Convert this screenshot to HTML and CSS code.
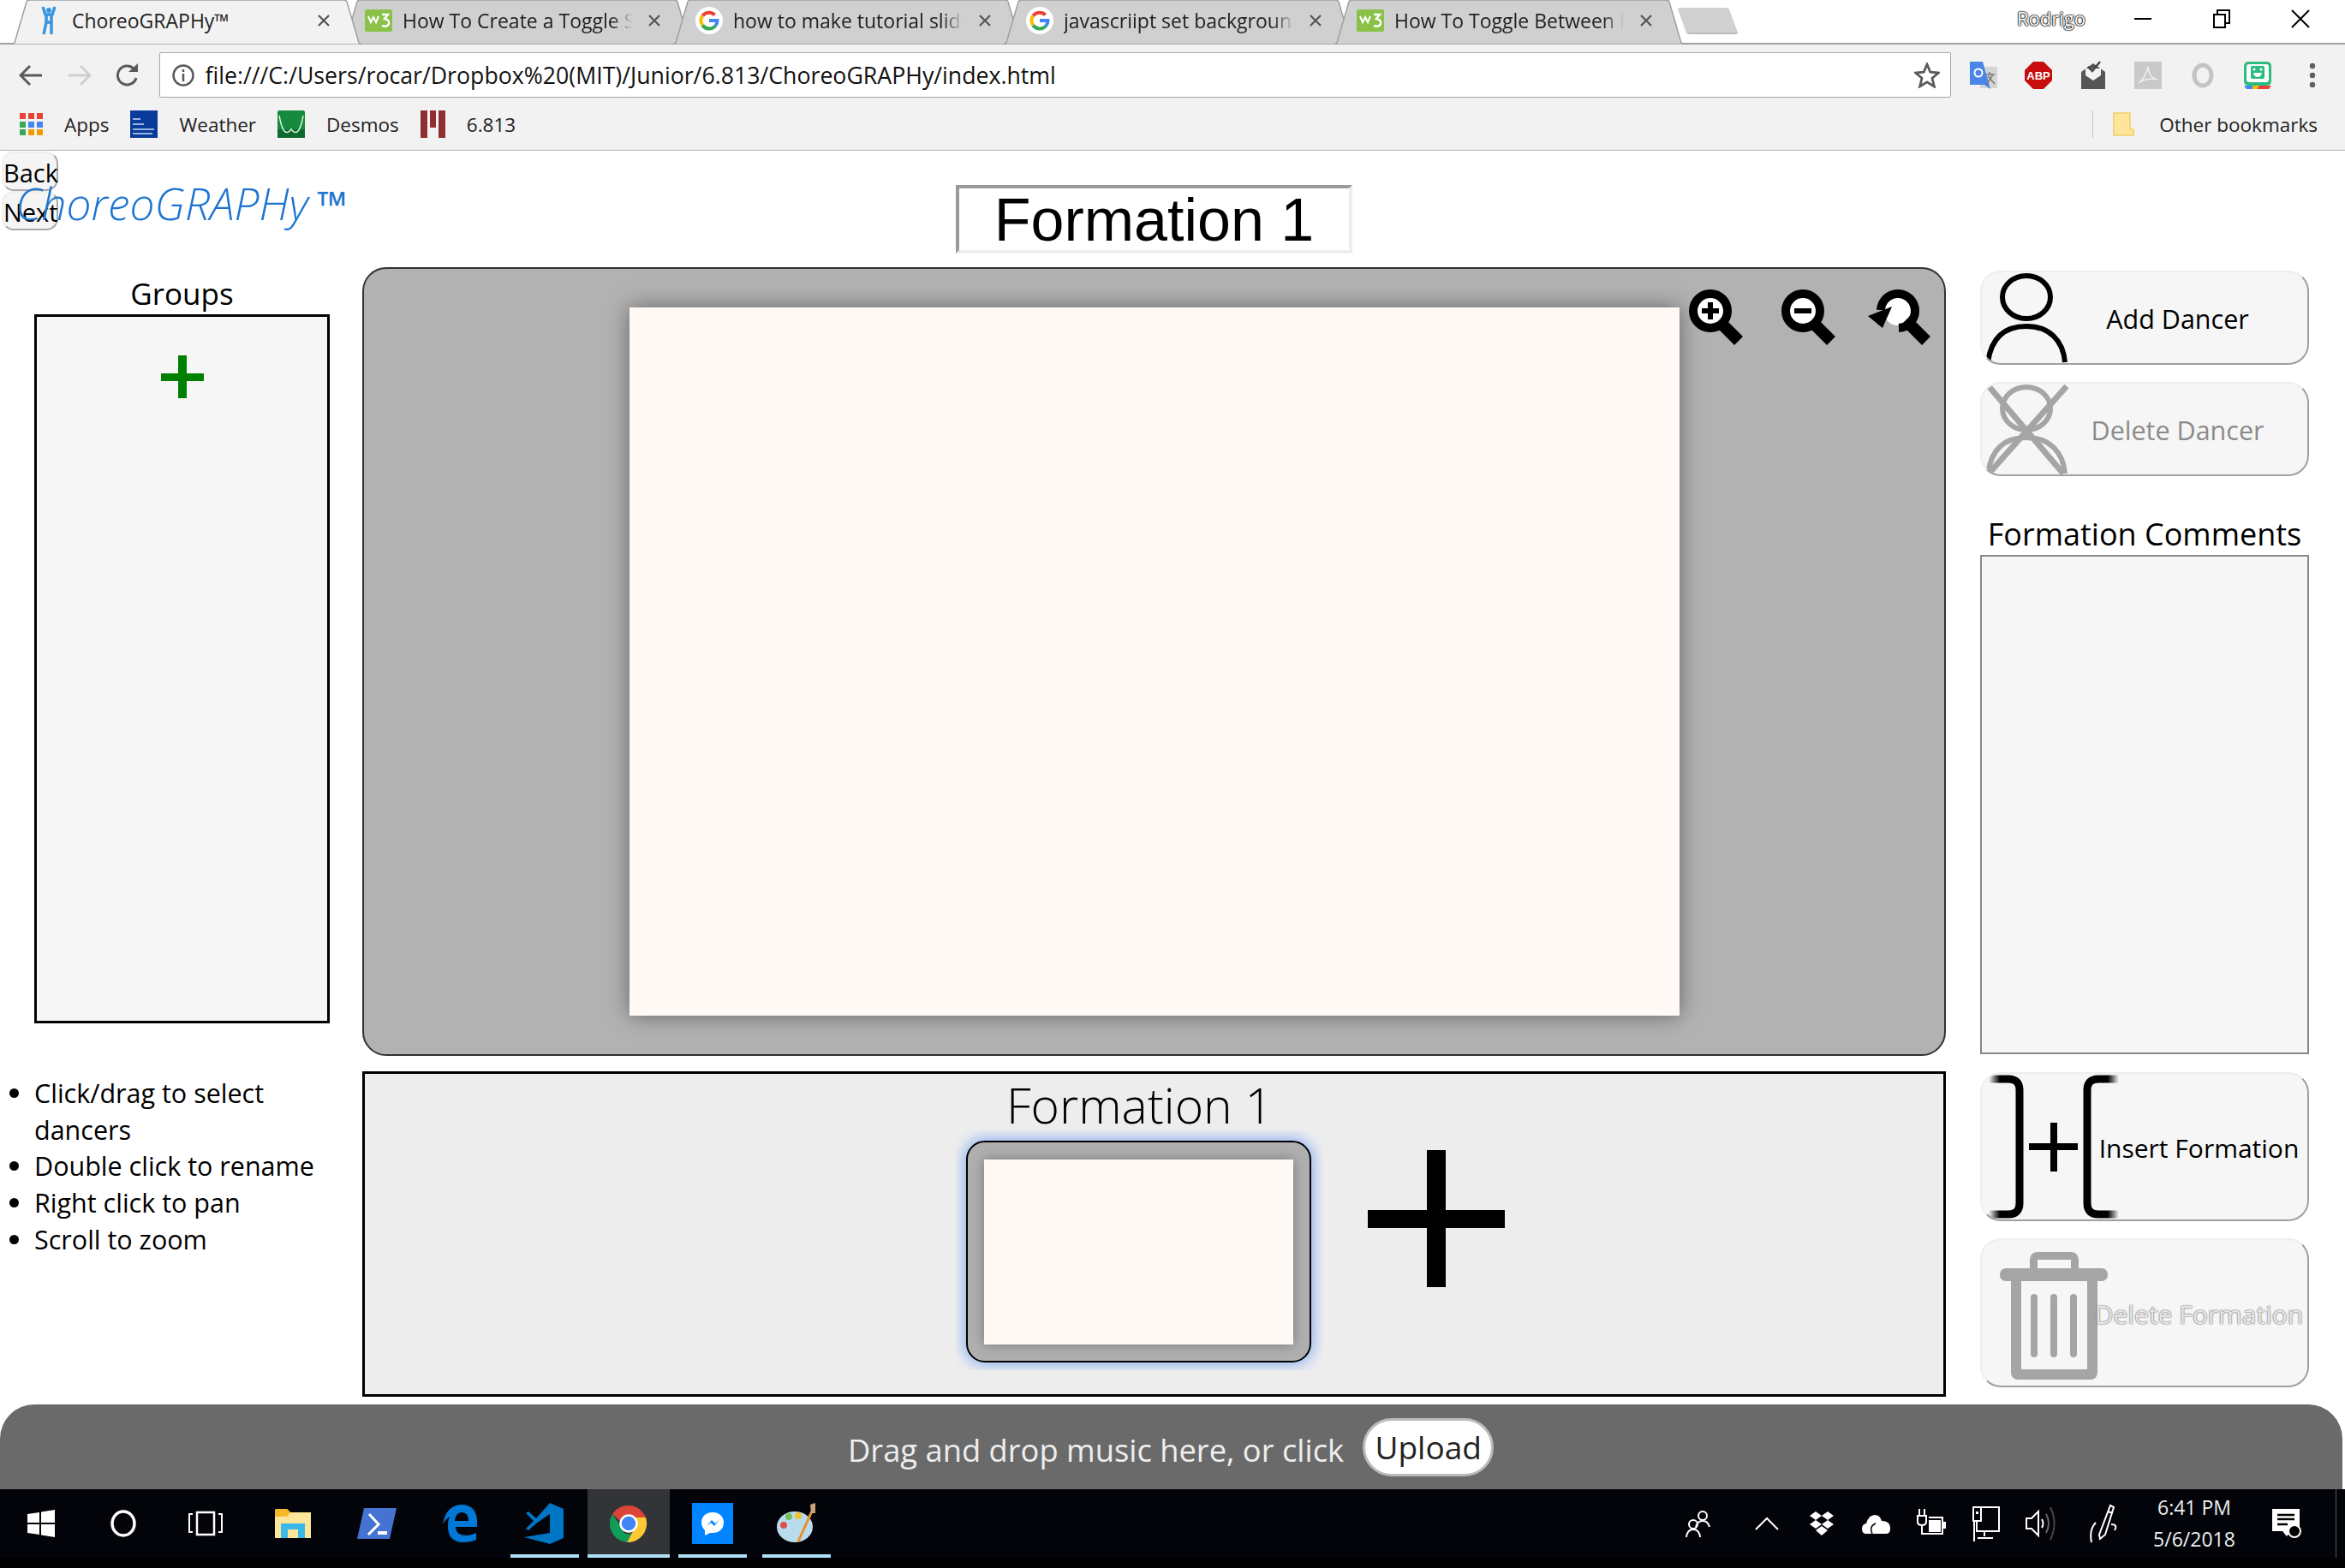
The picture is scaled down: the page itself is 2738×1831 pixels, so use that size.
FILE: index.html
```html
<!DOCTYPE html>
<html>
<head>
  <title>ChoreoGRAPHy</title>
  <link rel="stylesheet" href="styles.css">
</head>
<body>

<!-- shared icons -->
<svg class="defs">
  <symbol id="tabShape" viewBox="0 0 410 52" preserveAspectRatio="none">
    <path d="M0 52 L4 50 L18 2 Q19 0 22 0 L388 0 Q391 0 392 2 L406 50 L410 52 Z"/>
  </symbol>
  <symbol id="w3" viewBox="0 0 32 26">
    <rect width="32" height="26" rx="2" fill="#8ac249"/>
    <path d="M4 8 L7 15 L10 9 L13 15 L16 8" fill="none" stroke="#fff" stroke-width="2"/>
    <path d="M20 6 H27 L23 11 Q29 12 28 17 Q26 21 20 19" fill="none" stroke="#fff" stroke-width="2.4"/>
  </symbol>
  <symbol id="google" viewBox="0 0 32 32">
    <circle cx="16" cy="16" r="16" fill="#fff"/>
    <path d="M22.5 9.5 A9.5 9.5 0 0 0 8.3 10.5" fill="none" stroke="#ea4335" stroke-width="4"/>
    <path d="M8.3 10.5 A9.5 9.5 0 0 0 8.3 21.5" fill="none" stroke="#fbbc05" stroke-width="4"/>
    <path d="M8.3 21.5 A9.5 9.5 0 0 0 23 22.5" fill="none" stroke="#34a853" stroke-width="4"/>
    <path d="M23 22.5 A9.5 9.5 0 0 0 25.5 16 H16" fill="none" stroke="#4285f4" stroke-width="4"/>
  </symbol>
  <symbol id="close" viewBox="0 0 16 16">
    <path d="M2 2 L14 14 M14 2 L2 14" stroke="#555" stroke-width="2.2" fill="none"/>
  </symbol>
</svg>

<div class="tabstrip">
  <div class="tab active">
    <svg class="tab-bg"><use href="#tabShape"/></svg>
    <svg class="tab-icon" width="18" height="34" viewBox="0 0 18 34">
      <circle cx="9" cy="5" r="3" fill="#3a95e0"/>
      <path d="M2 1 L5 10 L13 10 L16 1 M6 10 L6 19 L3 33 M12 10 L12 19 L12 33 M6 19 L12 19" fill="none" stroke="#3a95e0" stroke-width="3.5"/>
    </svg>
    <span class="tab-title t1">ChoreoGRAPHy™</span>
    <svg class="tab-close" width="16" height="16"><use href="#close"/></svg>
  </div>
  <div class="tab">
    <svg class="tab-bg"><use href="#tabShape"/></svg>
    <svg class="tab-icon" width="32" height="26"><use href="#w3"/></svg>
    <span class="tab-title fade">How To Create a Toggle S</span>
    <svg class="tab-close" width="16" height="16"><use href="#close"/></svg>
  </div>
  <div class="tab">
    <svg class="tab-bg"><use href="#tabShape"/></svg>
    <svg class="tab-icon" width="32" height="32"><use href="#google"/></svg>
    <span class="tab-title fade">how to make tutorial slide</span>
    <svg class="tab-close" width="16" height="16"><use href="#close"/></svg>
  </div>
  <div class="tab">
    <svg class="tab-bg"><use href="#tabShape"/></svg>
    <svg class="tab-icon" width="32" height="32"><use href="#google"/></svg>
    <span class="tab-title fade">javascriipt set background</span>
    <svg class="tab-close" width="16" height="16"><use href="#close"/></svg>
  </div>
  <div class="tab">
    <svg class="tab-bg"><use href="#tabShape"/></svg>
    <svg class="tab-icon" width="32" height="26"><use href="#w3"/></svg>
    <span class="tab-title fade">How To Toggle Between H</span>
    <svg class="tab-close" width="16" height="16"><use href="#close"/></svg>
  </div>
  <div class="new-tab"></div>
  <div class="profile">Rodrigo</div>
  <div class="win-btn">
    <svg width="20" height="20"><path d="M0 10 H20" stroke="#000" stroke-width="2"/></svg>
  </div>
  <div class="win-btn">
    <svg width="20" height="22"><path d="M1 6 H14 V21 H1 Z M5 6 V1 H19 V16 H14" fill="none" stroke="#000" stroke-width="2"/></svg>
  </div>
  <div class="win-btn">
    <svg width="22" height="22"><path d="M1 1 L21 21 M21 1 L1 21" stroke="#000" stroke-width="2"/></svg>
  </div>
</div>

<div class="toolbar">
  <div class="nav-btn">
    <svg width="28" height="26"><path d="M27 13 H3 M13 2 L2 13 L13 24" fill="none" stroke="#5a5a5a" stroke-width="3"/></svg>
  </div>
  <div class="nav-btn">
    <svg width="28" height="26"><path d="M1 13 H25 M15 2 L26 13 L15 24" fill="none" stroke="#cfcfcf" stroke-width="3"/></svg>
  </div>
  <div class="nav-btn">
    <svg width="28" height="28"><path d="M24 17 A11 11 0 1 1 21 6" fill="none" stroke="#5a5a5a" stroke-width="3"/><path d="M15 10 H26 V0 Z" fill="#5a5a5a"/></svg>
  </div>
  <div class="omnibox">
    <svg class="info" width="26" height="26"><circle cx="13" cy="13" r="11.5" fill="none" stroke="#5a5a5a" stroke-width="2.5"/><path d="M13 11 V20 M13 6 V9" stroke="#5a5a5a" stroke-width="2.5"/></svg>
    <span class="url">file:///C:/Users/rocar/Dropbox%20(MIT)/Junior/6.813/ChoreoGRAPHy/index.html</span>
    <svg class="star" width="30" height="30" viewBox="0 0 30 30"><path d="M15 2 L18.8 11.2 L28.5 12 L21 18.3 L23.4 28 L15 22.8 L6.6 28 L9 18.3 L1.5 12 L11.2 11.2 Z" fill="none" stroke="#5a5a5a" stroke-width="2.8"/></svg>
  </div>
  <div class="ext">
    <svg width="32" height="32" viewBox="0 0 32 32"><rect x="12" y="6" width="20" height="25" fill="#d5d5d5"/><path d="M0 0 H15 L24 32 L17 27 H0 Z" fill="#4a86e8"/><path d="M18 15 H29 M23 12 V15 M20 26 L27 15 M21 17 L29 26" stroke="#777" stroke-width="1.5" fill="none"/><circle cx="10" cy="13" r="4.5" fill="none" stroke="#fff" stroke-width="2"/></svg>
  </div>
  <div class="ext">
    <svg width="32" height="32" viewBox="0 0 32 32"><path d="M10 0 H22 L32 10 V22 L22 32 H10 L0 22 V10 Z" fill="#c70d0d"/><text x="16" y="21" class="abp">ABP</text></svg>
  </div>
  <div class="ext">
    <svg width="30" height="36" viewBox="0 0 30 36"><path d="M1 14 L15 4 L29 14 V34 H1 Z" fill="#555"/><path d="M6 10 H24 V18 L15 24 L6 18 Z" fill="#f2f2f2"/><path d="M9 8 L14 13 L23 2" fill="none" stroke="#444" stroke-width="2.5"/></svg>
  </div>
  <div class="ext">
    <svg width="32" height="32" viewBox="0 0 32 32"><rect width="32" height="32" fill="#c9c9c9"/><path d="M5 25 Q13 19 16 6 Q17 19 27 21 Q15 18 5 25 Z" fill="none" stroke="#eee" stroke-width="1.5"/></svg>
  </div>
  <div class="ext">
    <svg width="26" height="30" viewBox="0 0 26 30"><ellipse cx="13" cy="15" rx="10" ry="12" fill="none" stroke="#c4c4c4" stroke-width="5"/></svg>
  </div>
  <div class="ext">
    <svg width="32" height="32" viewBox="0 0 32 32"><rect width="32" height="28" rx="5" fill="#2bbd7e"/><rect x="3" y="3" width="26" height="21" rx="3" fill="#fff"/><rect x="8" y="5" width="16" height="15" rx="2" fill="#2bbd7e"/><circle cx="12" cy="9" r="1.5" fill="#fff"/><circle cx="20" cy="9" r="1.5" fill="#fff"/><path d="M11 13 H21 Q20 18 16 18 Q12 18 11 13 Z" fill="#fff"/><path d="M0 28 H10 V32 H3 Z" fill="#4285f4"/><path d="M10 28 H18 L15 32 H10 Z" fill="#fbbc05"/><path d="M18 28 H32 L29 32 H15 Z" fill="#ea4335"/></svg>
  </div>
  <div class="ext">
    <svg width="8" height="30"><circle cx="4" cy="4" r="3.2" fill="#5f5f5f"/><circle cx="4" cy="15" r="3.2" fill="#5f5f5f"/><circle cx="4" cy="26" r="3.2" fill="#5f5f5f"/></svg>
  </div>
</div>

<div class="bookmarks">
  <svg class="bm-icon" width="27" height="26" viewBox="0 0 27 26">
    <path d="M0 0h7v7H0zM10 0h7v7h-7zM20 0h7v7h-7z" fill="#e94235"/>
    <path d="M0 10h7v7H0z" fill="#34a853"/><path d="M10 10h7v7h-7zM20 10h7v7h-7z" fill="#4285f4"/>
    <path d="M0 19h7v7H0z" fill="#34a853"/><path d="M20 19h7v7h-7zM10 19h7v7h-7z" fill="#f29900"/>
  </svg>
  <span class="bm-label">Apps</span>
  <svg class="bm-icon" width="32" height="32" viewBox="0 0 32 32"><rect width="32" height="32" fill="#0a3a9a"/><path d="M3 10 H12 M3 16 H16 M3 22 H28 M3 27 H26" stroke="#9ab4e0" stroke-width="2"/></svg>
  <span class="bm-label">Weather</span>
  <svg class="bm-icon" width="32" height="32" viewBox="0 0 32 32"><rect width="32" height="32" rx="2" fill="#168a3e"/><rect y="22" width="32" height="10" fill="#0f6a30"/><path d="M2 6 Q7 34 16 22 Q25 34 30 6" fill="none" stroke="#d8f0dc" stroke-width="1.5"/></svg>
  <span class="bm-label">Desmos</span>
  <svg class="bm-icon" width="29" height="32" viewBox="0 0 29 32"><path d="M0 0h8v32H0zM11 0h7v20h-7zM21 0h8v32h-8z" fill="#8f2f2f"/></svg>
  <span class="bm-label">6.813</span>
  <div class="bm-right">
    <div class="bm-divider"></div>
    <svg class="bm-folder" width="25" height="28" viewBox="0 0 25 28"><path d="M1 1 H20 V20 H24 V27 H1 Z" fill="#fde59a" stroke="#efcf6a" stroke-width="1.5"/></svg>
    <span class="bm-label">Other bookmarks</span>
  </div>
</div>

<div class="page">
  <button class="step-btn back-btn">Back</button>
  <button class="step-btn next-btn">Next</button>

  <div class="page-head">
    <div class="logo">ChoreoGRAPHy <span class="tm">™</span></div>
    <div class="title-box">Formation 1</div>
  </div>

  <div class="left-col">
    <div class="groups-head">Groups</div>
    <div class="groups-box">
      <div class="green-plus"></div>
    </div>
    <ul class="help">
      <li>Click/drag to select dancers</li>
      <li>Double click to rename</li>
      <li>Right click to pan</li>
      <li>Scroll to zoom</li>
    </ul>
  </div>

  <div class="stage">
    <div class="canvas"></div>
    <div class="zoom-tools">
      <svg width="64" height="66" viewBox="0 0 64 66">
        <path d="M34 36 L58 60" stroke="#000" stroke-width="14"/>
        <circle cx="25" cy="25" r="20" fill="#fff" stroke="#000" stroke-width="10"/>
        <path d="M25 15 V35 M15 25 H35" stroke="#000" stroke-width="6"/>
      </svg>
      <svg width="64" height="66" viewBox="0 0 64 66">
        <path d="M34 36 L58 60" stroke="#000" stroke-width="14"/>
        <circle cx="25" cy="25" r="20" fill="#fff" stroke="#000" stroke-width="10"/>
        <path d="M15 25 H35" stroke="#000" stroke-width="6"/>
      </svg>
      <svg width="76" height="76" viewBox="0 0 76 76">
        <circle cx="37" cy="25" r="17" fill="#fff"/>
        <path d="M46 36 L70 60" stroke="#000" stroke-width="14"/>
        <path d="M17 24 A20 20 0 1 1 38 45" fill="none" stroke="#000" stroke-width="10"/>
        <path d="M2 31 L30 20 L19 45 Z" fill="#000"/>
      </svg>
    </div>
  </div>

  <div class="right-col">
    <button class="side-btn dancer-btn">
      <svg class="side-icon" width="100" height="107" viewBox="0 0 100 107">
        <ellipse cx="49" cy="29" rx="28" ry="25" fill="none" stroke="#000" stroke-width="6"/>
        <path d="M4 105 C8 76 24 63 49 63 C76 63 92 80 94 105" fill="none" stroke="#000" stroke-width="6"/>
      </svg>
      <span class="side-label">Add Dancer</span>
    </button>
    <button class="side-btn dancer-btn disabled">
      <svg class="side-icon" width="100" height="107" viewBox="0 0 100 107">
        <ellipse cx="49" cy="29" rx="28" ry="25" fill="none" stroke="#a5a5a5" stroke-width="6"/>
        <path d="M4 105 C8 76 24 63 49 63 C76 63 92 80 94 105" fill="none" stroke="#a5a5a5" stroke-width="6"/>
        <path d="M5 3 L92 105 M96 3 L5 105" fill="none" stroke="#a5a5a5" stroke-width="7"/>
      </svg>
      <span class="side-label">Delete Dancer</span>
    </button>
    <div class="comments-head">Formation Comments</div>
    <div class="comments-box"></div>
    <button class="side-btn formation-btn insert-btn">
      <svg class="side-icon" width="160" height="170" viewBox="0 0 160 170">
        <defs>
          <linearGradient id="fadeLeft" gradientUnits="userSpaceOnUse" x1="5" y1="0" x2="18" y2="0">
            <stop offset="0" stop-color="#000" stop-opacity="0"/><stop offset="1" stop-color="#000"/>
          </linearGradient>
          <linearGradient id="fadeRight" gradientUnits="userSpaceOnUse" x1="157" y1="0" x2="144" y2="0">
            <stop offset="0" stop-color="#000" stop-opacity="0"/><stop offset="1" stop-color="#000"/>
          </linearGradient>
        </defs>
        <path d="M5 6 H28 Q41 6 41 19 V151 Q41 164 28 164 H5" fill="none" stroke="url(#fadeLeft)" stroke-width="9"/>
        <path d="M157 6 H133 Q120 6 120 19 V151 Q120 164 133 164 H157" fill="none" stroke="url(#fadeRight)" stroke-width="9"/>
        <path d="M52 85 H109 M81 57 V114" stroke="#000" stroke-width="8"/>
      </svg>
      <span class="side-label">Insert Formation</span>
    </button>
    <button class="side-btn formation-btn delete-btn">
      <svg class="side-icon" width="160" height="170" viewBox="0 0 160 170">
        <path d="M57.5 33 V23 Q57.5 18.5 62 18.5 H101 Q105.5 18.5 105.5 23 V33" fill="none" stroke="#a5a5a5" stroke-width="9"/>
        <rect x="18" y="33" width="126" height="15" rx="7" fill="#a5a5a5"/>
        <path d="M37 40 V155 Q37 157 39 157 H124 Q126 157 126 155 V40" fill="none" stroke="#a5a5a5" stroke-width="12"/>
        <path d="M58 67 V133 M81 67 V133 M104 67 V133" stroke="#a5a5a5" stroke-width="8" stroke-linecap="round"/>
      </svg>
      <span class="side-label ghost">Delete Formation</span>
    </button>
  </div>

  <div class="strip">
    <div class="frame">
      <div class="frame-title">Formation 1</div>
      <div class="glow-clip">
        <div class="thumb"><div class="thumb-canvas"></div></div>
      </div>
    </div>
    <div class="big-plus"></div>
  </div>
</div>

<div class="dropbar">
  <span>Drag and drop music here, or click</span>
  <button class="upload-btn">Upload</button>
</div>

<div class="taskbar">
  <div class="tb-item">
    <svg width="32" height="32" viewBox="0 0 32 32"><path d="M0 5 L14 3 V15 H0 Z M16 2.5 L32 0 V15 H16 Z M0 17 H14 V29 L0 27 Z M16 17 H32 V32 L16 29.5 Z" fill="#fff"/></svg>
  </div>
  <div class="tb-item cortana">
    <svg width="32" height="32" viewBox="0 0 32 32"><ellipse cx="16" cy="16" rx="13" ry="14" fill="none" stroke="#fff" stroke-width="3.5"/></svg>
  </div>
  <div class="tb-item taskview">
    <svg width="42" height="30" viewBox="0 0 42 30"><path d="M11 2 H31 V28 H11 Z" fill="none" stroke="#fff" stroke-width="2.5"/><path d="M6 4 H2 V25 H6 M36 4 H40 V25 H36" fill="none" stroke="#fff" stroke-width="2"/></svg>
  </div>
  <div class="tb-item">
    <svg width="42" height="34" viewBox="0 0 42 34"><path d="M0 2 Q0 0 2 0 H14 L18 4 H42 V34 H0 Z" fill="#fde599"/><path d="M0 2 Q0 0 2 0 H14 L18 4 L14 9 H0 Z" fill="#f4b829"/><path d="M7 34 V17 H35 V34 H27 V24 H15 V34 Z" fill="#3bb7e8"/></svg>
  </div>
  <div class="tb-item">
    <svg width="46" height="36" viewBox="0 0 46 36"><path d="M8 0 H46 L38 36 H0 Z" fill="#4672d2"/><path d="M14 7 L25 19 L13 31" fill="none" stroke="#fff" stroke-width="3"/><rect x="24" y="27" width="11" height="4" fill="#fff"/></svg>
  </div>
  <div class="tb-item">
    <svg width="42" height="44" viewBox="0 0 42 44"><path d="M40 26 H15 Q15 36 28 36 Q34 36 39 33 V41 Q33 44 24 44 Q6 44 6 25 Q6 18 8 14 Q3 17 0 23 Q4 0 23 0 Q42 1 40 26 Z M14 19 H30 Q30 9 22 9 Q15 9 14 19 Z" fill="#0078d7"/></svg>
  </div>
  <div class="tb-item open">
    <svg width="48" height="48" viewBox="0 0 48 48"><path d="M30 0 L46 7 V41 L30 48 L0 40 L30 35 V13 L14 24 L5 32 L2 30 L11 21 L2 12 L5 10 L14 18 Z" fill="#0075c4"/></svg>
  </div>
  <div class="tb-item current">
    <svg width="44" height="44" viewBox="0 0 44 44">
      <path d="M3 11 A22 22 0 0 1 42 15 H22 A7 7 0 0 0 14 21 Z" fill="#db4437"/>
      <path d="M42 15 A22 22 0 0 1 20 44 L29 27 A7 7 0 0 0 22 15 Z" fill="#fcc934"/>
      <path d="M20 44 A22 22 0 0 1 3 11 L14 27 A7 7 0 0 0 29 27 Z" fill="#0f9d58"/>
      <circle cx="22" cy="22" r="9.5" fill="#4285f4" stroke="#fff" stroke-width="2.5"/>
    </svg>
  </div>
  <div class="tb-item open">
    <svg width="48" height="48" viewBox="0 0 48 48"><rect width="48" height="48" fill="#0084ff"/><path d="M24 11 C15 11 11 17 11 23 C11 27 13 30 15 32 V38 L21 35 C22 35 23 35 24 35 C33 35 37 29 37 23 C37 17 33 11 24 11 Z" fill="#fff"/><path d="M17 27 L23 20 L27 24 L32 19 L26 27 L22 23 Z" fill="#0084ff"/></svg>
  </div>
  <div class="tb-item open">
    <svg width="48" height="48" viewBox="0 0 48 48"><ellipse cx="22" cy="28" rx="21" ry="18" fill="#b8dcee"/><circle cx="9" cy="26" r="4" fill="#e0504a"/><circle cx="15" cy="16" r="4" fill="#6fbf5a"/><circle cx="26" cy="15" r="4" fill="#f2c12e"/><path d="M45 3 L26 45" stroke="#e8912d" stroke-width="3"/><path d="M40 2 L46 0 L46 12 L41 12 Z" fill="#c9a679"/></svg>
  </div>

  <div class="tray">
    <div class="tray-item people">
      <svg width="30" height="32" viewBox="0 0 30 32"><g fill="none" stroke="#fff" stroke-width="2"><circle cx="20" cy="7" r="5"/><path d="M12 20 Q14 13 20 13 Q26 13 28 20"/><circle cx="9" cy="17" r="5"/><path d="M1 32 Q2 23 9 23 Q16 23 17 32"/></g></svg>
    </div>
    <div class="tray-item">
      <svg width="28" height="16"><path d="M1 15 L14 2 L27 15" fill="none" stroke="#fff" stroke-width="2"/></svg>
    </div>
    <div class="tray-item">
      <svg width="28" height="28" viewBox="0 0 28 28"><path d="M7 0 L14 5 L7 10 L0 5 Z M21 0 L28 5 L21 10 L14 5 Z M7 10 L14 15 L7 20 L0 15 Z M21 10 L28 15 L21 20 L14 15 Z M14 17 L21 22 L14 28 L7 22 Z" fill="#fff"/></svg>
    </div>
    <div class="tray-item">
      <svg width="34" height="24" viewBox="0 0 34 24"><path d="M5 24 Q0 24 0 18 Q0 13 5 12 Q8 2 15 2 Q21 2 23 9 Q33 9 33 18 Q33 24 28 24 Z" fill="#fff"/><path d="M12 24 Q8 15 16 12" fill="none" stroke="#000" stroke-width="1.5"/></svg>
    </div>
    <div class="tray-item">
      <svg width="34" height="34" viewBox="0 0 34 34"><path d="M3 0 V8 M9 0 V8 M1 8 H11 V15 Q11 19 6 19 Q1 19 1 15 Z M6 19 V29 H30 V10 H14" fill="none" stroke="#fff" stroke-width="2"/><rect x="14" y="13" width="14" height="14" fill="#fff"/><rect x="31" y="15" width="3" height="8" fill="#fff"/></svg>
    </div>
    <div class="tray-item">
      <svg width="32" height="42" viewBox="0 0 32 42"><path d="M5 2 H31 V30 H5 Z M14 30 V36 M6 38 H24 M2 2 V42" fill="none" stroke="#fff" stroke-width="2"/><rect x="1" y="2" width="9" height="16" fill="#000" stroke="#fff" stroke-width="2"/><rect x="4" y="7" width="3" height="3" fill="#fff"/></svg>
    </div>
    <div class="tray-item">
      <svg width="36" height="44" viewBox="0 0 36 44"><path d="M1 16 H7 L15 8 V36 L7 28 H1 Z" fill="none" stroke="#fff" stroke-width="2"/><path d="M19 17 Q22 22 19 27" fill="none" stroke="#fff" stroke-width="2"/><path d="M24 11 Q30 22 24 33" fill="none" stroke="#666" stroke-width="2"/><path d="M29 3 Q38 22 29 41" fill="none" stroke="#444" stroke-width="2"/></svg>
    </div>
    <div class="tray-item pen">
      <svg width="34" height="50" viewBox="0 0 34 50"><path d="M12 38 L25 4 L29 6 L19 38 L13 43 Z M22 11 L28 13" fill="none" stroke="#fff" stroke-width="2"/><path d="M8 24 Q0 32 3 47 M26 26 Q34 26 30 33" fill="none" stroke="#fff" stroke-width="2"/></svg>
    </div>
    <div class="clock">
      <div>6:41 PM</div>
      <div>5/6/2018</div>
    </div>
    <div class="tray-item notif">
      <svg width="34" height="34" viewBox="0 0 34 34"><path d="M0 0 H32 V26 H22 L17 32 L12 26 H0 Z" fill="#fff"/><path d="M6 7 H26 M6 12 H26 M6 18 H18" stroke="#000" stroke-width="2.5"/><circle cx="26" cy="26" r="7" fill="#000" stroke="#fff" stroke-width="2"/></svg>
    </div>
    <div class="show-desktop"></div>
  </div>
</div>

</body>
</html>
```

FILE: styles.css
```css
* {
  box-sizing: border-box;
}
html, body {
  margin: 0;
  height: 1831px;
  overflow: hidden;
  background: #fff;
}
body {
  font-family: "Open Sans", sans-serif;
  color: #000;
}
.defs {
  display: none;
}

/* browser chrome */
.tabstrip {
  display: flex;
  align-items: flex-start;
  height: 52px;
  padding-left: 13px;
  background: linear-gradient(#fff 50px, #a0a0a0 50px, #a0a0a0 52px);
}
.tab {
  position: relative;
  flex: none;
  display: flex;
  align-items: center;
  width: 410px;
  height: 52px;
  margin-right: -24px;
  padding: 0 0 4px 27px;
  fill: #d0d0d0;
  stroke: #a0a0a0;
  stroke-width: 1.5;
}
.tab.active {
  padding-left: 35px;
  fill: #f2f2f2;
  z-index: 1;
}
.tab-bg {
  position: absolute;
  left: 0;
  top: 0;
  width: 100%;
  height: 100%;
  overflow: visible;
}
.tab-icon {
  position: relative;
  flex: none;
  stroke: none;
}
.tab-title {
  position: relative;
  flex: none;
  width: 271px;
  margin-left: 12px;
  font-size: 23px;
  white-space: nowrap;
  color: #222;
  stroke: none;
}
.tab-title.t1 {
  margin-left: 18px;
}
.tab-title.fade {
  -webkit-mask-image: linear-gradient(to right, #000 90%, transparent 99%);
  mask-image: linear-gradient(to right, #000 90%, transparent 99%);
}
.tab-close {
  position: absolute;
  right: 37px;
  top: 16px;
  stroke: none;
}
.new-tab {
  flex: none;
  width: 60px;
  height: 31px;
  margin: 9px 0 0 21px;
  background: #d0d0d0;
  transform: skewX(20deg);
  border-radius: 3px;
  border-bottom: 2px solid #bbb;
}
.profile {
  flex: none;
  width: 79px;
  margin: 6px 22px 0 331px;
  font-size: 22px;
  color: #fff;
  text-shadow: 0 0 2px #000, 0 0 2px #000, 0 0 1px #000, 0 0 1px #000;
  white-space: nowrap;
}
.win-btn {
  flex: none;
  width: 92px;
  height: 44px;
  display: flex;
  align-items: center;
  justify-content: center;
}
.toolbar {
  display: flex;
  align-items: center;
  height: 71px;
  padding: 0 6px 0 8px;
  background: #f2f2f2;
}
.nav-btn {
  flex: none;
  width: 56.5px;
  display: flex;
  justify-content: center;
}
.omnibox {
  flex: 1;
  display: flex;
  align-items: center;
  height: 53px;
  margin: 0 6px 0 8px;
  padding: 0 12px 0 14px;
  background: #fff;
  border: 1.5px solid #a8a8a8;
  border-radius: 2px;
}
.url {
  flex: 1;
  margin-left: 13px;
  font-size: 26.7px;
  white-space: nowrap;
  color: #111;
}
.ext {
  flex: none;
  width: 64px;
  display: flex;
  justify-content: center;
}
.abp {
  font-family: "Liberation Sans", sans-serif;
  font-size: 13px;
  font-weight: bold;
  fill: #fff;
  text-anchor: middle;
}
.bookmarks {
  display: flex;
  align-items: center;
  height: 53px;
  padding: 0 32px 8px 23px;
  background: #f2f2f2;
  border-bottom: 1.5px solid #b4b4b4;
}
.bm-icon {
  flex: none;
}
.bm-label {
  margin: 0 25px;
  font-size: 22.5px;
  white-space: nowrap;
  color: #222;
}
.bm-right {
  display: flex;
  align-items: center;
  margin-left: auto;
}
.bm-right .bm-label {
  margin: 0;
}
.bm-divider {
  width: 1px;
  height: 32px;
  background: #c8c8c8;
  margin-right: 23px;
}
.bm-folder {
  margin-right: 29px;
}

/* page */
.page {
  position: relative;
  display: grid;
  width: 2735px;
  height: 1464px;
  grid-template-columns: 423px 1849px 1fr;
  grid-template-rows: 136px 921px 18px 380px;
}
.step-btn {
  position: absolute;
  left: 2px;
  width: 66px;
  height: 46px;
  padding: 0;
  font-family: inherit;
  font-size: 29px;
  line-height: 46px;
  color: #000;
  background: #f5f5f5;
  border: 2px solid;
  border-color: #eee #aaa #aaa #eee;
  border-radius: 14px;
}
.back-btn {
  top: 1px;
}
.next-btn {
  top: 47px;
}
.page-head {
  grid-column: 1 / -1;
  display: flex;
  align-items: flex-start;
}
.logo {
  position: relative;
  z-index: 1;
  width: 1116px;
  padding: 29px 0 0 18px;
  font-size: 51.5px;
  font-style: italic;
  font-weight: 300;
  line-height: 64px;
  color: #1e75d0;
  white-space: nowrap;
}
.logo .tm {
  margin-left: -3px;
  font-style: normal;
  font-weight: 600;
  font-size: 46px;
  line-height: 1;
}
.title-box {
  width: 463px;
  height: 80px;
  margin-top: 40px;
  font-family: "Liberation Sans", sans-serif;
  font-size: 70px;
  line-height: 74px;
  text-align: center;
  border: 4px solid;
  border-color: #9a9a9a #eee #eee #9a9a9a;
}
.left-col {
  grid-column: 1;
  grid-row: 2 / 5;
}
.groups-head {
  width: 425px;
  height: 55px;
  padding-top: 6px;
  font-size: 35px;
  line-height: 50px;
  text-align: center;
}
.groups-box {
  display: flex;
  justify-content: center;
  width: 345px;
  height: 828px;
  margin-left: 40px;
  padding-top: 45px;
  background: #f6f6f6;
  border: 3px solid #000;
}
.green-plus {
  width: 50px;
  height: 50px;
  background:
    linear-gradient(#008000, #008000) center / 10px 50px no-repeat,
    linear-gradient(#008000, #008000) center / 50px 9px no-repeat;
}
.help {
  width: 385px;
  margin: 60px 0 0;
  padding-left: 40px;
  font-size: 30.5px;
  line-height: 42.7px;
}
.stage {
  position: relative;
  grid-column: 2;
  grid-row: 2;
  padding: 45px 0 0 310px;
  background: #b2b2b2;
  border: 2.5px solid #333;
  border-radius: 28px;
}
.canvas {
  width: 1226px;
  height: 827px;
  background: #fff9f5;
  box-shadow: 0 0 24px #666;
}
.zoom-tools {
  position: absolute;
  top: 24px;
  left: 1547px;
  display: flex;
  gap: 44px;
}
.zoom-tools svg:last-child {
  margin-left: -9px;
}
.right-col {
  grid-column: 3;
  grid-row: 2 / 5;
  padding: 4px 0 0 40px;
  display: flex;
  flex-direction: column;
  width: 424px;
}
.side-btn {
  display: flex;
  align-items: center;
  flex: none;
  width: 384px;
  padding: 0;
  font-family: inherit;
  color: #000;
  background: #f6f6f6;
  border: 2.5px solid;
  border-color: #eee #a0a0a0 #a0a0a0 #eee;
  border-radius: 24px;
  overflow: hidden;
}
.side-icon {
  flex: none;
}
.side-label {
  flex: 1;
  padding-top: 2px;
  font-size: 30.5px;
  white-space: nowrap;
  text-align: center;
}
.formation-btn .side-label {
  font-size: 30px;
}
.dancer-btn {
  height: 110px;
  padding-left: 3px;
}
.dancer-btn + .dancer-btn {
  margin-top: 20px;
}
.dancer-btn .side-icon {
  margin-right: -26px;
}
.disabled .side-label {
  color: #8b8b8b;
}
.comments-head {
  width: 384px;
  height: 92px;
  padding-top: 46px;
  font-size: 36px;
  line-height: 44px;
  text-align: center;
  white-space: nowrap;
}
.comments-box {
  flex: none;
  width: 384px;
  height: 583px;
  background: #f6f6f6;
  border: 2.5px solid #888;
}
.formation-btn {
  height: 174px;
  padding-left: 3px;
}
.insert-btn {
  margin-top: 21px;
}
.delete-btn {
  margin-top: 20px;
}
.formation-btn .side-icon {
  margin-right: -36px;
}
.ghost {
  color: #e8e8e8;
  text-shadow: 0 0 2px #666, 0 0 1px #666;
}
.strip {
  grid-column: 2;
  grid-row: 4;
  display: flex;
  padding-left: 690px;
  background: #ededed;
  border: 3px solid #000;
}
.frame {
  flex: none;
  width: 429px;
}
.frame-title {
  height: 66px;
  font-size: 57px;
  font-weight: 300;
  line-height: 72px;
  text-align: center;
  white-space: nowrap;
}
.glow-clip {
  height: 280px;
  padding: 12px 14px 0 12px;
  overflow: hidden;
}
.thumb {
  display: flex;
  justify-content: center;
  align-items: center;
  width: 403px;
  height: 259px;
  background: #b0b0b0;
  border: 2px solid #000;
  border-radius: 22px;
  box-shadow: 0 0 16px 3px #8fb2f2;
}
.thumb-canvas {
  width: 361px;
  height: 216px;
  margin-top: 1px;
  background: #fff9f5;
  box-shadow: 0 0 14px #777;
}
.big-plus {
  width: 160px;
  height: 160px;
  margin: 89px 0 0 52px;
  background:
    linear-gradient(#000, #000) center / 22px 160px no-repeat,
    linear-gradient(#000, #000) center / 160px 21px no-repeat;
}

/* music bar */
.dropbar {
  display: flex;
  align-items: center;
  width: 2735px;
  height: 99px;
  padding: 6px 0 0 990px;
  color: #eee;
  font-size: 36.3px;
  background: #6a6a6a;
  border-radius: 40px 40px 0 0;
}
.upload-btn {
  height: 68px;
  width: 153px;
  margin: -6px 0 0 22px;
  padding: 0;
  font-family: inherit;
  font-size: 37px;
  color: #222;
  background: #fff;
  border: 3px solid #bbb;
  border-radius: 34px;
}

/* taskbar */
.taskbar {
  display: flex;
  height: 92px;
  padding-bottom: 12px;
  background: linear-gradient(#02040a 80px, #000 80px);
}
.tb-item {
  position: relative;
  flex: none;
  display: flex;
  align-items: center;
  justify-content: center;
  width: 96px;
  height: 80px;
  margin-right: 2px;
}
.cortana {
  padding-right: 5px;
}
.taskview {
  padding-right: 8px;
}
.tb-item.open::after,
.tb-item.current::after {
  content: "";
  position: absolute;
  left: 8px;
  right: 8px;
  bottom: 0;
  height: 4px;
  background: #aee0f8;
}
.tb-item.current {
  background: #333438;
}
.tb-item.current::after {
  left: 0;
  right: 0;
}
.tray {
  display: flex;
  align-items: center;
  margin-left: auto;
  height: 80px;
  color: #fff;
}
.tray-item {
  flex: none;
  width: 64px;
  display: flex;
  justify-content: center;
}
.people {
  margin-right: 16px;
}
.pen {
  margin-left: 9px;
}
.clock {
  flex: none;
  width: 130px;
  margin-left: 9px;
  font-size: 23px;
  line-height: 37px;
  text-align: center;
  color: #eee;
}
.notif {
  margin-left: 11px;
}
.show-desktop {
  flex: none;
  width: 11px;
  height: 80px;
  margin-left: 25px;
  border-left: 1px solid #555;
}
```
